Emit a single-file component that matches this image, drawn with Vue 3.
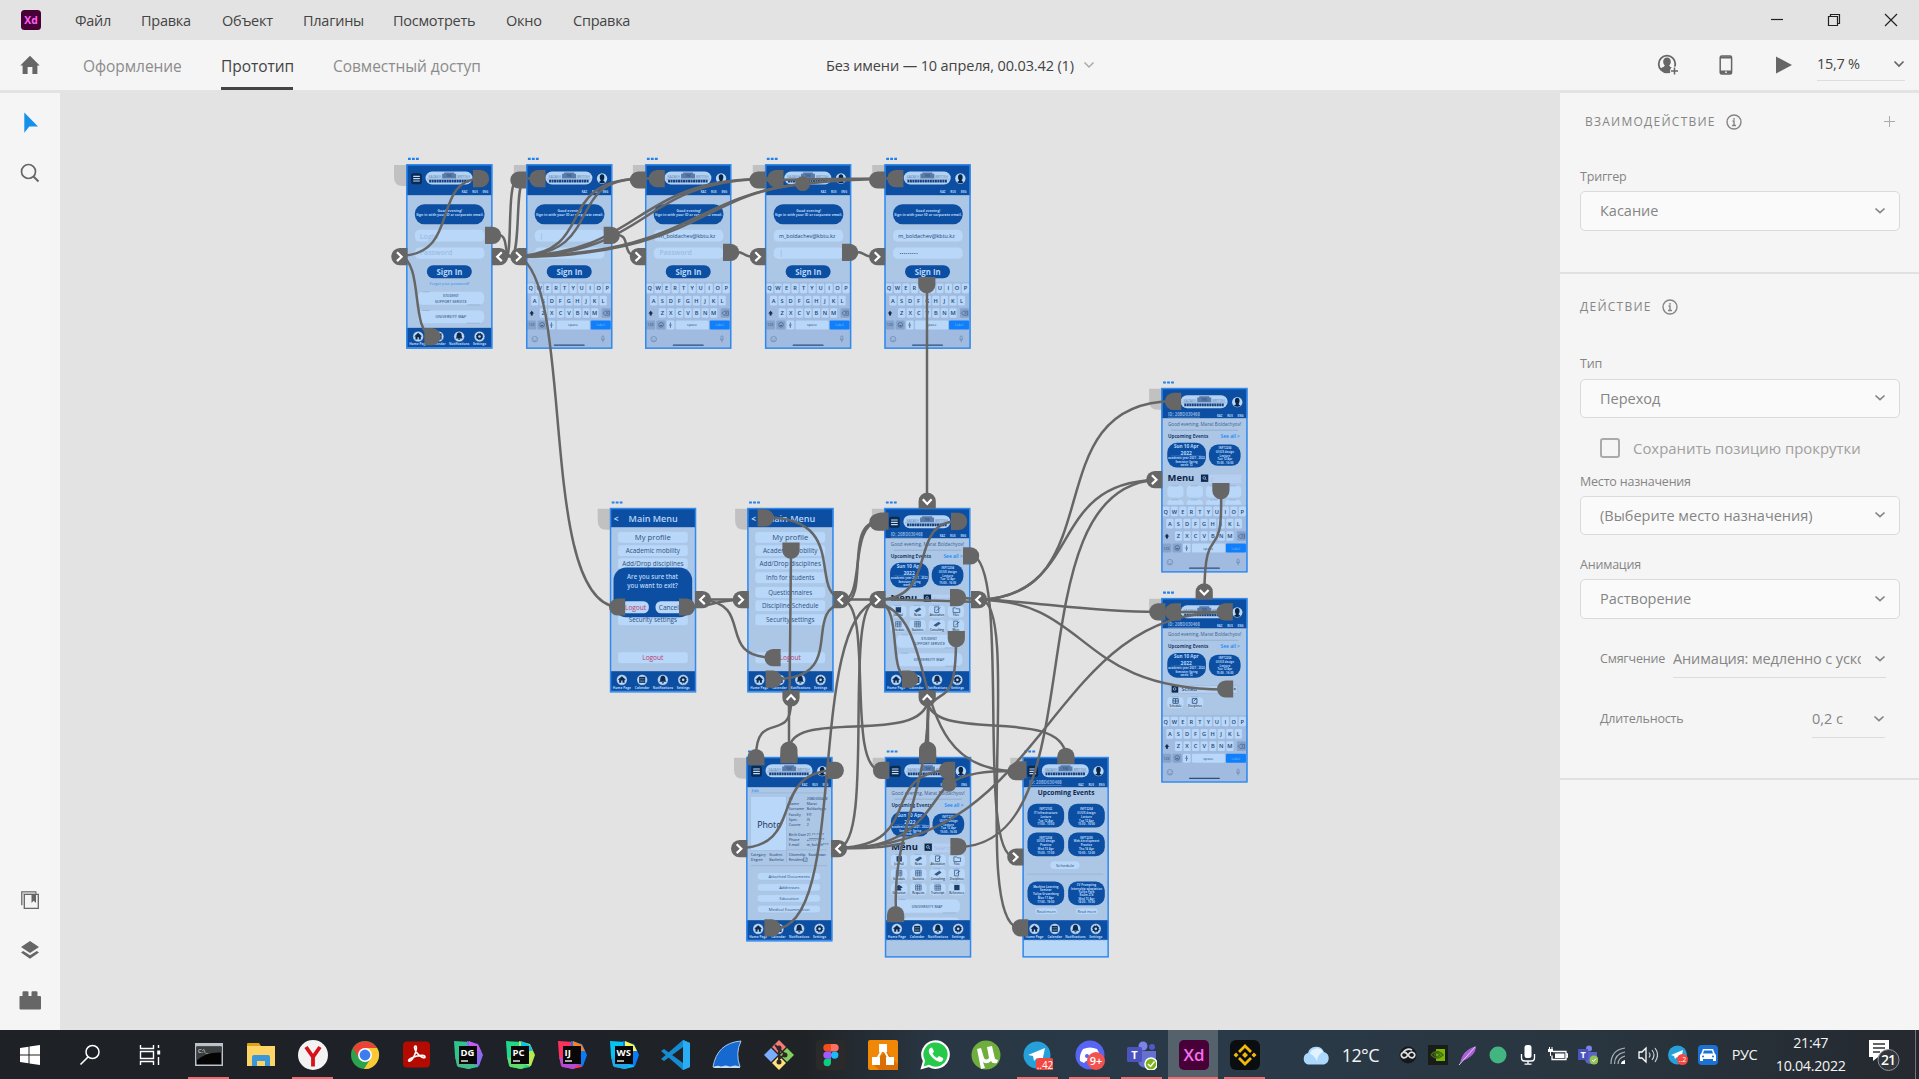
<script setup>
const menus = [
  ['Файл', 66], ['Правка', 81], ['Объект', 81], ['Плагины', 90], ['Посмотреть', 113], ['Окно', 67], ['Справка', 70],
]

/* Artboards: position of the top-left corner, kind of screen and height in board units (3 units = 1px) */
const boards = [
  { x: 406.5, y: 164.5, kind: 'login' },
  { x: 526.4, y: 164.5, kind: 'login', kb: true, one: '|', two: '' },
  { x: 645.4, y: 164.5, kind: 'login', kb: true, one: 'm_boldachev@kbtu.kz', two: 'Password' },
  { x: 765.3, y: 164.5, kind: 'login', kb: true, one: 'm_boldachev@kbtu.kz', two: '|' },
  { x: 884.7, y: 164.5, kind: 'login', kb: true, one: 'm_boldachev@kbtu.kz', two: '•••••••••' },
  { x: 610.2, y: 508.2, kind: 'menu', dialog: true },
  { x: 747.6, y: 508.2, kind: 'menu' },
  { x: 884.4, y: 508.2, kind: 'home', rows: 2 },
  { x: 746.5, y: 757.2, kind: 'profile' },
  { x: 885.2, y: 757.2, kind: 'home', rows: 3, tall: true },
  { x: 1022.8, y: 757.2, kind: 'events', tall: true },
  { x: 1161.6, y: 388.2, kind: 'home', kb: true, rows: 0 },
  { x: 1161.6, y: 598.3, kind: 'home', kb: true, rows: 0, search: true },
]
const height = (b) => (b.tall ? 598 : 550)

const keys = [
  ...'QWERTYUIOP'.split('').map((c, i) => ({ c, x: 2 + i * 25.5, y: 5 })),
  ...'ASDFGHJKL'.split('').map((c, i) => ({ c, x: 14 + i * 25.7, y: 42 })),
  ...'ZXCVBNM'.split('').map((c, i) => ({ c, x: 40 + i * 25.7, y: 79 })),
]
const menuItems = [
  ['My profile', 88, 108], ['Academic mobility', 128, 163], ['Add/Drop disciplines', 167, 184],
  ['Info for students', 209, 145], ['Questionnaires', 253, 132], ['Discipline Schedule', 293, 170], ['Security settings', 335, 145],
]
/* The dialog covers the rows in the middle of the list */
const visibleItems = (b) => menuItems.filter((m) => !b.dialog || m[1] < 200 || m[1] > 300)
const tiles = ['Journal', 'News', 'Attestation', 'Files', 'Schedule', 'Statistics', 'Consulting', 'Disciplines', 'Education', 'Requests', 'Transcript', 'References']
const tileX = [17, 75, 133, 190]
const profile = [
  ['ID', '20BD030468', 127], ['Name', 'Marat', 143], ['Surname', 'Boldachyov', 158], ['Faculty', 'FIT', 176], ['Spec.', 'IS', 191],
  ['Course', '2', 206], ['Birth Date', '21.**.****', 236], ['Phone', '+7777****', 251], ['E-mail', 'm_bolach***', 266],
]
const docs = [['Attached Documents', 346, 124], ['Addresses', 379, 60], ['Education', 412, 58], ['Medical Examination', 444, 122]]
const events = [
  [14, 140, ['INFT2102', 'IT Infrastructure', 'Lecture', 'Tue 12 Apr', '11:00 - 13:00']],
  [136, 140, ['INFT2204', 'UI/UX design', 'Lecture', 'Tue 12 Apr', '15:00 - 16:00']],
  [14, 226, ['INFT2204', 'UI/UX design', 'Practice', 'Wed 13 Apr', '15:00 - 17:00']],
  [136, 226, ['INFT2205', 'Web development', 'Practice', 'Thu 14 Apr', '10:00 - 12:00']],
  [14, 373, ['Machine Learning', 'Seminar', 'Yuliya Grosenberg', 'Mon 11 Apr', '17:00 - 19:00']],
  [136, 373, ['CV Prompting', 'Internship adaptation', 'Yuliya Park', 'Room 274', 'Wed 13 Apr', '14:00 - 15:00']],
]

const links = [
  'M400 256C462 254 430 180 481 178.5', 'M400 256C424 262 410 332 432 336', 'M498 235C510 235 502 256 512 256.5', 'M503 256.5H522',
  'M506 257C513 256 506 180 518 178', 'M512 257C520 250 516 190 522 184', 'M518 178.5H538', 'M638 178.5H656', 'M757 178.5H775', 'M877 178.5H895',
  'M522 256C596 250 555 181 638 179', 'M522 256C604 252 565 180 638 179', 'M522 256C640 252 635 182 757 179', 'M522 257C650 252 640 184 757 179',
  'M522 256C690 254 690 196 803 184', 'M522 257C700 254 700 193 803 184', 'M795 185C830 180 850 180 877 179', 'M750 181C830 178 850 179 877 178.5',
  'M520 257C575 290 538 600 617 607', 'M617 235C632 235 620 256 638 256', 'M735 252C748 252 740 257 757 257', 'M855 252C868 252 860 257 877 257',
  'M927 288V500', 'M689 607C715 607 712 600 740 600', 'M703 599.5H740', 'M703 600C755 604 715 657 772 657.5', 'M765 517.5C850 517 808 592 842 599',
  'M775 679C848 679 802 612 842 603', 'M791 552L789.5 700', 'M842 599.5H878', 'M842 600.5C866 600 848 523 879 522', 'M845 603C868 598 846 527 875 522',
  'M878 600C942 598 905 521 959 521', 'M878 599L980 602', 'M878 600C905 609 885 679 911 679.5', 'M878 603C945 620 900 770 1015 771',
  'M842 600C874 602 846 768 880 770', 'M876 601C842 602 876 846 838 848', 'M876 601C805 625 850 932 773 929',
  'M971 555C1012 560 975 855 1014 857', 'M981 600C1022 602 970 928 1020 928', 'M955 597.5C975 598 978 600 983 600',
  'M979 600C1085 595 1045 483 1155 480', 'M979 600C1115 595 1032 403 1173 401', 'M958 847C1100 845 1010 490 1155 480',
  'M979 599C1040 602 1090 612 1157 612', 'M979 600C1090 600 1075 689 1225 689.5', 'M839 848C1050 848 1045 612 1225 612', 'M839 848C870 849 885 847 905 843',
  'M1221 492C1223 570 1205 515 1204.4 592', 'M791 700C792 745 756 708 756 757', 'M789 700V750', 'M928 700C922 745 800 710 790 745',
  'M927 700C932 745 1060 705 1066 755', 'M928 700V750', 'M929 700L926 750', 'M956 640C956 700 944 690 933 702',
  'M738 848C808 848 765 772 836 770', 'M839 848C925 845 878 775 947 770', 'M839 848C920 850 930 800 949 784C965 773 985 771 1015 771',
  'M896 912C892 830 930 790 928 700', 'M1173 612C1190 612 1200 612 1225 612',
]

/* Handles: left, top, rounded side, chevron direction */
const handles = [
  [473, 170, 'r'], [485, 226.7, 'r'], [391.3, 248, 'l', 'r'], [492, 248, 'r', 'l'], [510.3, 248, 'l', 'r'], [510.3, 171.4, 'l'],
  [529.3, 170, 'l'], [603.7, 226.7, 'r'], [629.8, 248, 'l', 'r'], [629.8, 171.4, 'l'], [648.6, 170, 'l'], [424.4, 328, 'r'],
  [749.4, 171.4, 'l'], [767.3, 170, 'l'], [869, 171.4, 'l'], [887.2, 170, 'l'], [723, 243.8, 'r'], [749.6, 248, 'l', 'r'],
  [842, 243.8, 'r'], [869, 248, 'l', 'r'], [918.2, 277, 'd'],
  [609, 598.4, 'l'], [679, 598.4, 'r'], [695, 591, 'r', 'l'], [732.6, 591, 'l', 'r'], [757.6, 509.2, 'r'], [782.4, 542.6, 'd'],
  [764.4, 649, 'l'], [765.6, 670.6, 'r'], [833.2, 591, 'r', 'l'], [869.3, 591, 'l', 'r'], [869.3, 513.6, 'l'], [872.3, 512.6, 'l'],
  [951, 512.8, 'r'], [963, 547.3, 'r'], [950, 589, 'r'], [971, 591, 'r', 'l'], [947.7, 631, 'd'], [902, 670.6, 'r'],
  [918.6, 492.6, 'u', 'd'], [782.4, 690.4, 'd', 'u'], [918.6, 690.4, 'd', 'u'],
  [747.3, 749, 'u'], [780.3, 741.6, 'u'], [780.3, 747, 'u'], [919, 741.6, 'u'], [919, 747, 'u'], [1057.3, 747.7, 'u'],
  [827.7, 761.7, 'r'], [873, 761.7, 'l'], [939, 761.7, 'l'], [1007.3, 763, 'l'], [1010.3, 761.3, 'l'],
  [731, 840, 'l', 'r'], [831, 840, 'r', 'l'], [950.4, 838, 'r'], [1007.2, 848.4, 'l', 'r'], [887, 906, 'u'], [1012, 919.3, 'l'], [764.4, 919.3, 'r'],
  [1165, 392.7, 'l'], [1146.2, 471, 'l', 'r'], [1212.3, 483, 'd'], [1195.6, 583.2, 'u', 'd'], [1149.3, 603.3, 'l'], [1164.8, 603.3, 'l'],
  [1216.6, 603.3, 'l'], [1217, 680.4, 'l'],
]
function shape([x, y, side]) {
  const a = 16.2, b = 17.2, r = 8.6
  if (side === 'r') return `M${x} ${y}h${a - r}a${r} ${r} 0 0 1 0 ${b}h${r - a}z`
  if (side === 'l') return `M${x + a} ${y}h${r - a}a${r} ${r} 0 0 0 0 ${b}h${a - r}z`
  if (side === 'd') return `M${x} ${y}v${a - r}a${r} ${r} 0 0 0 ${b} 0v${r - a}z`
  return `M${x} ${y + a}v${r - a}a${r} ${r} 0 0 1 ${b} 0v${a - r}z`
}
function chevron([x, y, side, dir]) {
  const cx = x + (side === 'u' || side === 'd' ? 8.6 : side === 'l' ? 8 : 7.5)
  const cy = y + (side === 'd' ? 7.2 : side === 'u' ? 9 : 8.7)
  const s = 2.3, l = 4.4
  if (dir === 'r') return `M${cx - s} ${cy - l}L${cx + s} ${cy}L${cx - s} ${cy + l}`
  if (dir === 'l') return `M${cx + s} ${cy - l}L${cx - s} ${cy}L${cx + s} ${cy + l}`
  if (dir === 'd') return `M${cx - l} ${cy - s}L${cx} ${cy + s}L${cx + l} ${cy - s}`
  return `M${cx - l} ${cy + s}L${cx} ${cy - s}L${cx + l} ${cy + s}`
}
const arrows = handles.filter((h) => h[3])

const jet = {
  dg: ['DG', '#2fc48b', '#8a6bf0', '#c45cf0', '#45b98c'],
  pc: ['PC', '#21d789', '#b8ea4e', '#07c3f2', '#5fdc6a'],
  ij: ['IJ', '#fe315d', '#087cfa', '#fc801d', '#b24bd8'],
  ws: ['WS', '#07c3f2', '#087cfa', '#fcf84a', '#20a9e8'],
}
const apps = ['cmd', 'folder', 'yandex', 'chrome', 'acrobat', 'dg', 'pc', 'ij', 'ws', 'code', 'shark', 'git', 'figma', 'drawio', 'whatsapp', 'utorrent', 'telegram', 'discord', 'teams', 'xd', 'binance']
const running = ['cmd', 'yandex', 'telegram', 'discord', 'teams', 'xd', 'binance']
</script>

<template>
  <div class="app">
    <header class="titlebar">
      <svg class="logo" width="22" height="22" viewBox="0 0 22 22"><rect x="1" y="1" width="20" height="20" rx="3.5" fill="#470137" /><text x="11" y="14.6" text-anchor="middle" font-size="11" font-weight="700" fill="#ff61f6" textLength="13.5" lengthAdjust="spacingAndGlyphs">Xd</text></svg>
      <nav class="menus"><span v-for="m in menus" :key="m[0]" :style="{ width: m[1] + 'px' }">{{ m[0] }}</span></nav>
      <div class="winbtns">
        <svg width="14" height="14" viewBox="0 0 14 14"><path d="M1 6.5h12" /></svg>
        <svg width="14" height="14" viewBox="0 0 14 14"><path d="M1.500 3.500h9v9h-9zM3.500 3.500v-2h9v9h-2" /></svg>
        <svg width="14" height="14" viewBox="0 0 14 14"><path d="M1 1l12 12M13 1L1 13" /></svg>
      </div>
    </header>

    <div class="toolbar">
      <svg class="home" width="20" height="20" viewBox="0 0 20 20"><path d="M10 .8L.3 10.500h2.300V19h5v-7h4.800v7h5v-8.500h2.300z" fill="#666" /></svg>
      <div class="tabs"><span>Оформление</span><span class="on">Прототип</span><span>Совместный доступ</span></div>
      <div class="doc"><span>Без имени — 10 апреля, 00.03.42 (1)</span><svg width="12" height="8" viewBox="0 0 12 8"><path d="M1.500 1.500L6 6l4.500-4.500" /></svg></div>
      <div class="tools">
        <svg width="22" height="22" viewBox="0 0 22 22"><circle cx="10" cy="10" r="8.300" fill="none" stroke="#666" stroke-width="1.800" /><path d="M10 3.500c-2.500 0-3.800 1.800-3.800 4.200 0 2 .9 3 1.500 3.700.2 1-.2 1.400-3.700 2.700l-1 .5C5 16 7 12.500 10 12.500s5 3.500 7 2.100l-1-.5c-3.500-1.300-3.900-1.700-3.700-2.700.6-.7 1.500-1.700 1.500-3.700 0-2.400-1.300-4.200-3.800-4.200z" fill="#666" /><path d="M3.500 14.500q3.500-1.300 4.200-2.500h4.600q.7 1.200 4.200 2.500-2.500 3.500-6.500 3.500t-6.500-3.500z" fill="#666" /><circle cx="17.500" cy="17" r="4.500" fill="#f5f5f5" /><path d="M17.500 13.500v7M14 17h7" stroke="#666" stroke-width="1.500" /></svg>
        <svg width="14" height="20" viewBox="0 0 14 20"><rect x="1.200" y="1" width="11.400" height="18" rx="1.500" fill="none" stroke="#666" stroke-width="1.500" /><path d="M1 1.500h12v2H1zM1 15.500h12v3.300H1z" fill="#666" /><circle cx="7" cy="17.200" r=".9" fill="#f5f5f5" /></svg>
        <svg width="18" height="18" viewBox="0 0 18 18"><path d="M1 .5L17 9 1 17.500z" fill="#666" /></svg>
      </div>
      <div class="zoom"><span>15,7 %</span><svg width="12" height="8" viewBox="0 0 12 8"><path d="M1.500 1.500L6 6l4.500-4.500" /></svg></div>
    </div>

    <main class="work">
      <aside class="rail">
        <svg class="pointer" width="20" height="22" viewBox="0 0 20 22"><path d="M3.300.5v20.300l5-6.300H17z" fill="#1491ea" /></svg>
        <svg class="mag" width="20" height="20" viewBox="0 0 20 20"><circle cx="8.500" cy="8.500" r="7" fill="none" stroke="#666" stroke-width="1.700" /><path d="M13.500 13.500l5 5" stroke="#666" stroke-width="2" /></svg>
        <div class="spring"></div>
        <svg width="18" height="18" viewBox="0 0 18 18"><path d="M.8 14.300V.8h14v2M3.300 3.300h14v14h-14z" fill="none" stroke="#666" stroke-width="1.300" /><path d="M1.500 1.500h13v1.300H2.800V14H1.500z" fill="#bbb" /><path d="M10.500 3.500h4.500V12l-2.300-2.200L10.500 12z" fill="#666" /></svg>
        <svg width="20" height="20" viewBox="0 0 20 20"><path d="M10 1l9 6-9 6-9-6zM1 12.500l2.200-1.600L10 15.300l6.800-4.400L19 12.500 10 18.700z" fill="#666" /></svg>
        <svg width="22" height="20" viewBox="0 0 22 20"><path d="M1 6h2.500V2.500q0-1.200 1.200-1.200h3.600q1.200 0 1.200 1.200V6h3V2.500q0-1.200 1.200-1.200h3.600q1.200 0 1.200 1.200V6H21q1 0 1 1v11.500q0 1-1 1H1.500q-1 0-1-1V7q0-1 .5-1z" fill="#666" /></svg>
      </aside>

      <svg class="canvas" width="1500" height="937" viewBox="60 93 1500 937">
        <defs>
          <g id="crest">
            <rect x="57" y="21" width="141" height="39" rx="19.500" fill="#b4d2f4" />
            <text x="66" y="40" class="tiny dim" textLength="38" lengthAdjust="spacingAndGlyphs">KAZAKH</text>
            <text x="152" y="40" class="tiny dim" textLength="38" lengthAdjust="spacingAndGlyphs">BRITISH</text>
            <path d="M107 42V28h6v-4h30v4h6v14z" fill="#5a7ba8" /><text x="128" y="38" class="tiny" fill="#1d4274" text-anchor="middle">THE</text>
            <path d="M62 44h132" stroke="#8fb0d8" stroke-width="3" /><path d="M68 50h120" stroke="#16407c" stroke-width="8" stroke-dasharray="6 1.500" />
          </g>
          <g id="burger"><rect x="14" y="26" width="32" height="33" rx="6" fill="#0b2a4e" /><path d="M20 35.500h20M20 42.500h20M20 49.500h20" stroke="#bcd9fb" stroke-width="3.500" /></g>
          <g id="avatar"><circle cx="227" cy="42" r="15.500" fill="#b8d7f9" /><path d="M227 29c-9 0-8 14-4 18 0 4-4 3-6 6q10 6 20 0c-2-3-6-2-6-6 4-4 5-18-4-18z" fill="#082545" /></g>
          <g id="langs" class="tiny bold" fill="#b8d7f9"><text x="166" y="85">KAZ</text><text x="197" y="85">RUS</text><text x="228" y="85">ENG</text></g>
          <g id="tabbar">
            <rect y="489" width="257" height="59" fill="#0c4ea2" />
            <circle v-for="x in [35, 96, 158, 219]" :key="x" :cx="x" cy="515" r="16" fill="#b8d7f9" stroke="#082f66" />
            <g fill="#0b2a4e"><path d="M35 504l-12 11h4v9h6v-7h4v7h6v-9h4z" /><path d="M87 506h18v18H87z" /><path d="M89 511h14M89 516h14M89 520h14" stroke="#87a9d4" stroke-width="1.500" /><path d="M158 503c-7 0-8 7-8 14l-3 4h22l-3-4c0-7-1-14-8-14zm-3 19h6v3h-6z" /><circle cx="219" cy="515" r="6.500" fill="none" stroke="#0b2a4e" stroke-width="5" /><circle cx="219" cy="515" r="9.500" fill="none" stroke="#0b2a4e" stroke-width="3" stroke-dasharray="4 3.400" /></g>
            <g class="small bold" fill="#b8d7f9" text-anchor="middle"><text x="35" y="541" textLength="54" lengthAdjust="spacingAndGlyphs">Home Page</text><text x="96" y="541" textLength="44" lengthAdjust="spacingAndGlyphs">Calendar</text><text x="158" y="541" textLength="61" lengthAdjust="spacingAndGlyphs">Notifications</text><text x="219" y="541" textLength="39" lengthAdjust="spacingAndGlyphs">Settings</text></g>
          </g>
          <g id="keyboard">
            <rect width="257" height="198" fill="#a0bbdf" />
            <g v-for="k in keys" :key="k.c"><rect :x="k.x" :y="k.y" width="21.500" height="29" rx="4" fill="#b8d7f9" /><text :x="k.x + 10.700" :y="k.y + 21" class="key" text-anchor="middle">{{ k.c }}</text></g>
            <path d="M16 87l7 8h-4v6h-6v-6H9z" fill="#122c4d" />
            <rect x="226" y="79" width="27" height="29" rx="4" fill="#86a3cb" /><path d="M230 94l6-6h13v12h-13zM240 91l5 5M245 91l-5 5" fill="none" stroke="#27466f" stroke-width="1.500" />
            <rect x="2" y="116" width="27" height="27" rx="4" fill="#86a3cb" /><text x="15" y="134" class="small" text-anchor="middle" fill="#27466f">123</text>
            <rect x="33" y="116" width="27" height="27" rx="4" fill="#86a3cb" /><circle cx="47" cy="129" r="7" fill="none" stroke="#27466f" stroke-width="1.500" /><path d="M43 130q4 6 8 0z" fill="#27466f" />
            <rect x="64" y="116" width="23" height="27" rx="4" fill="#b8d7f9" /><path d="M75 122v9M71 129q4 7 8 0M75 133v5" stroke="#27466f" stroke-width="2" fill="none" />
            <rect x="91" y="116" width="99" height="27" rx="4" fill="#b8d7f9" /><text x="140" y="134" class="small" text-anchor="middle" fill="#27466f" textLength="30">space</text>
            <rect x="193" y="116" width="60" height="27" rx="3" fill="#0f7ffb" /><text x="223" y="134" class="small" text-anchor="middle" fill="#79bbff" textLength="26">Label</text>
            <circle cx="25" cy="172" r="8.500" fill="none" stroke="#5575a3" stroke-width="1.500" /><path d="M21 169v2M29 169v2M20 175q5 4 10 0" stroke="#5575a3" stroke-width="1.500" fill="none" />
            <rect x="226.500" y="162" width="6" height="12" rx="3" fill="none" stroke="#5575a3" stroke-width="1.500" /><path d="M224 172q5.500 8 11 0M229.500 176v5" stroke="#5575a3" stroke-width="1.500" fill="none" />
            <path d="M84 190h89" stroke="#2b517f" stroke-width="4" stroke-linecap="round" />
          </g>
        </defs>

        <g v-for="(b, i) in boards" :key="i">
          <path :d="`M${b.x} ${b.y + .5}h-12.500v12q0 9 9 9h3.500z`" fill="#c1c1c1" />
          <path :d="`M${b.x + 1.500} ${b.y - 5.700}h11`" stroke="#1f80ee" stroke-width="2.200" stroke-dasharray="2.800 1.200" />
          <g :transform="`translate(${b.x} ${b.y}) scale(.33333)`">
            <rect width="257" :height="height(b)" :fill="b.kind === 'events' ? '#b9d8f8' : '#acc6e6'" />
            <rect width="257" height="549" fill="#acc6e6" />
            <rect width="257" :height="b.kind === 'menu' ? 57 : b.kind === 'login' ? 92 : 90" fill="#0c4ea2" />
            <template v-if="b.kind !== 'menu'"><use href="#crest" /><use v-if="!b.kb" href="#burger" /><use href="#avatar" /><use href="#langs" /></template>

            <template v-if="b.kind === 'login'">
              <rect x="25" y="119" width="209" height="60" rx="28" fill="#0c4ea2" />
              <g class="small bold" fill="#b8d7f9" text-anchor="middle"><text x="130" y="143" textLength="74" lengthAdjust="spacingAndGlyphs">Good evening!</text><text x="130" y="155" textLength="202" lengthAdjust="spacingAndGlyphs">Sign in with your ID or corporate email.</text></g>
              <rect x="25" y="196" width="209" height="35" rx="14" fill="#b8d7f9" /><rect x="25" y="249" width="209" height="34" rx="14" fill="#b8d7f9" />
              <text v-if="!b.kb" x="40" y="223" class="ph">Login</text><text v-if="!b.kb" x="40" y="272" class="ph">Password</text>
              <text v-if="b.one === '|'" x="39" y="221" class="ph">|</text><text v-else-if="b.one" x="41" y="220" class="mail" textLength="169" lengthAdjust="spacingAndGlyphs">{{ b.one }}</text>
              <text v-if="b.two" :x="b.two[0] === '•' ? 45 : 42" y="272" :class="b.two[0] === '•' ? 'dots' : 'ph'" :textLength="b.two[0] === '•' ? 54 : undefined">{{ b.two }}</text>
              <rect x="61" y="302" width="135" height="39" rx="19.500" fill="#0c4ea2" /><text x="129" y="332" class="bold" font-size="24" fill="#b8d7f9" text-anchor="middle" textLength="78" lengthAdjust="spacingAndGlyphs">Sign In</text>
              <template v-if="!b.kb">
                <text x="129" y="362" class="mid" fill="#258ff3" text-anchor="middle" textLength="120" lengthAdjust="spacingAndGlyphs">Forgot your password?</text>
                <g class="card"><rect x="34" y="382" width="199" height="39" rx="14" /><rect x="34" y="438" width="199" height="38" rx="14" /></g>
                <g class="small semi" text-anchor="middle" fill="#405a7e"><text x="133" y="398">STUDENT</text><text x="133" y="416" textLength="95">SUPPORT SERVICE</text><text x="133" y="461" textLength="92">UNIVERSITY MAP</text></g>
              </template>
            </template>

            <template v-if="b.kind === 'menu'">
              <text x="11" y="42" font-size="25" class="bold" fill="#b8d7f9">&lt;</text><text x="129" y="41" font-size="27" class="semi" fill="#b8d7f9" text-anchor="middle" textLength="148" lengthAdjust="spacingAndGlyphs">Main Menu</text>
              <g v-for="m in visibleItems(b)" :key="m[0]"><rect x="22" :y="m[1] - 18" width="212" height="35" rx="10" fill="#b8d7f9" stroke="#9fbbe0" /><text x="128" :y="m[1] + 7" :font-size="m[1] === 88 ? 22 : 20" fill="#31527c" text-anchor="middle" :textLength="m[2]" lengthAdjust="spacingAndGlyphs">{{ m[0] }}</text></g>
              <rect x="22" y="431" width="212" height="35" rx="10" fill="#b8d7f9" stroke="#9fbbe0" /><text x="128" y="456" font-size="20" fill="#bd3a6c" text-anchor="middle" textLength="63">Logout</text>
              <template v-if="b.dialog">
                <rect x="10" y="178" width="236" height="149" rx="38" fill="#0c4ea2" />
                <g font-size="20" text-anchor="middle" fill="#b8d7f9" class="semi"><text x="127" y="213" textLength="153" lengthAdjust="spacingAndGlyphs">Are you sure that</text><text x="127" y="239" textLength="151" lengthAdjust="spacingAndGlyphs">you want to exit?</text></g>
                <rect x="32" y="279" width="84" height="36" rx="16" fill="#b8d7f9" /><rect x="136" y="279" width="98" height="36" rx="16" fill="#b8d7f9" />
                <text x="76" y="305" font-size="20" fill="#bd3a6c" text-anchor="middle" textLength="63">Logout</text><text x="176" y="305" font-size="20" fill="#31527c" text-anchor="middle" textLength="60">Cancel</text>
              </template>
            </template>

            <template v-if="b.kind === 'home'">
              <text v-if="!b.tall" x="19" y="83" class="mid bold" fill="#86afe0" text-decoration="underline" textLength="96" lengthAdjust="spacingAndGlyphs">ID: 20BD030468</text>
              <text x="19" y="114" font-size="16" fill="#42618c" textLength="220" lengthAdjust="spacingAndGlyphs">Good evening, Marat Boldachyov!</text>
              <path d="M28 126h202" stroke="#7c98be" stroke-width="1.500" />
              <text x="19" y="149" class="bold" font-size="15" fill="#1d3e6a" textLength="121" lengthAdjust="spacingAndGlyphs">Upcoming Events</text><text x="177" y="149" class="semi" font-size="15" fill="#1388fa" textLength="58" lengthAdjust="spacingAndGlyphs">See all &gt;</text>
              <rect x="17" y="164" width="116" height="74" rx="29" fill="#0c4ea2" /><rect x="142" y="169" width="95" height="64" rx="27" fill="#0c4ea2" />
              <g fill="#b8d7f9" text-anchor="middle" class="bold"><text x="74" y="180" font-size="16" textLength="74" lengthAdjust="spacingAndGlyphs">Sun 10 Apr</text><text x="74" y="199" font-size="16" textLength="34" lengthAdjust="spacingAndGlyphs">2022</text><text x="75" y="213" class="tiny" textLength="110" lengthAdjust="spacingAndGlyphs">academic year 2021 - 2022</text><text x="75" y="223" class="tiny" textLength="66" lengthAdjust="spacingAndGlyphs">Semester: Spring</text><text x="75" y="234" class="tiny">week: 12</text>
                <text v-for="(t, n) in events[1][2]" :key="n" x="190" :y="182 + n * 11.500" class="tiny">{{ t }}</text></g>
              <path d="M28 203h94" stroke="#7fa9dc" />
              <template v-if="!b.search">
                <text x="18" y="278" class="bold" font-size="27" fill="#0b2547" textLength="80" lengthAdjust="spacingAndGlyphs">Menu</text>
                <rect x="118" y="259" width="22" height="22" fill="#0b2a4e" /><circle cx="128" cy="269" r="4" fill="none" stroke="#b8d7f9" stroke-width="2" /><path d="M131 272l4 4" stroke="#b8d7f9" stroke-width="2" />
                <rect x="142" y="259" width="97" height="26" fill="#b6cff0" /><text x="147" y="277" font-size="17" fill="#9cb9df">{{ b.kb ? '|' : 'Search' }}</text>
              </template>
              <template v-else>
                <rect x="26" y="262" width="202" height="23" fill="#b6cff0" stroke="#8dabd0" /><rect x="30" y="263" width="20" height="20" fill="#0b2a4e" /><circle cx="39" cy="272" r="4" fill="none" stroke="#b8d7f9" stroke-width="2" /><text x="60" y="279" font-size="16" class="semi" fill="#2f4c74">Sched</text><text x="215" y="279" font-size="15">×</text>
                <g class="card"><rect x="17" y="296" width="49" height="34" rx="12" /><rect x="76" y="296" width="49" height="34" rx="12" /></g><path d="M34 301h16v14H34zM34 308h16M42 301v14M92 301h14v14H92zM96 309l10-10" fill="none" stroke="#294a75" stroke-width="2.500" /><text x="42" y="327" class="tiny" text-anchor="middle">Schedule</text><text x="100" y="327" class="tiny" text-anchor="middle">Disciplines</text>
              </template>
              <template v-if="b.kb && !b.search"><g class="card"><template v-for="x in tileX" :key="x"><rect :x="x" y="293" width="49" height="35" rx="12" /><rect :x="x" y="335" width="49" height="35" rx="12" /></template></g></template>
              <g v-for="(t, n) in tiles.slice(0, b.rows * 4)" :key="t" :transform="`translate(${tileX[n % 4]} ${292 + Math.floor(n / 4) * 43})`">
                <rect width="49" height="36" rx="12" class="tile" />
                <path v-if="n === 0 || n === 11" d="M17 5h16v16H17z" fill="#1d3d68" /><path v-else-if="n === 8" d="M12 12l12-7 12 7-12 6zM18 17h13v5H18z" fill="#1d3d68" /><path v-else-if="n % 5 === 1" d="M14 16l16-10 6 5-14 10z" fill="#36577f" /><path v-else-if="n % 5 === 2" d="M18 4h12v17H18zM23 15l12-9" fill="none" stroke="#27476f" stroke-width="2" /><path v-else-if="n % 5 === 3" d="M16 7h8l3 3h9v11H16z" fill="none" stroke="#27476f" stroke-width="2" /><path v-else d="M16 5h17v16H16zM16 10h17M16 15h17M22 5v16M28 5v16" fill="none" stroke="#36577f" stroke-width="1.800" />
                <text x="24.500" y="32" class="tiny" text-anchor="middle">{{ b.rows === 2 && n === 7 ? 'More' : t }}</text>
              </g>
              <template v-if="b.rows === 2"><g class="card"><rect x="36" y="380" width="198" height="39" rx="14" /><rect x="36" y="435" width="198" height="39" rx="14" /></g><g class="small semi" fill="#405a7e" text-anchor="middle"><text x="134" y="396">STUDENT</text><text x="134" y="411" textLength="95">SUPPORT SERVICE</text><text x="134" y="458" textLength="92">UNIVERSITY MAP</text></g></template>
              <template v-if="b.rows === 3"><g class="card"><rect x="26" y="427" width="198" height="40" rx="14" /><rect x="26" y="481" width="198" height="39" rx="14" /></g><text x="126" y="452" class="small semi" fill="#405a7e" text-anchor="middle" textLength="92">UNIVERSITY MAP</text></template>
            </template>

            <template v-if="b.kind === 'profile'">
              <text x="15" y="103" class="mid" fill="#1388fa" textLength="22">Edit</text><path d="M13 107h228M13 278h228M13 325h228M120 118v199" stroke="#8aa8d0" stroke-width="1.500" />
              <rect x="13" y="118" width="106" height="161" fill="#b8d7f9" stroke="#9dbbe0" /><text x="32" y="212" font-size="28" fill="#132c4e" textLength="73" lengthAdjust="spacingAndGlyphs">Photo</text>
              <g v-for="p in profile" :key="p[0]" class="small semi" fill="#405f8a"><text x="127" :y="p[2]">{{ p[0] }}</text><text x="181" :y="p[2]">{{ p[1] }}</text></g>
              <g class="small semi" fill="#405f8a"><text x="13" y="296">Category</text><text x="68" y="296">Student</text><text x="127" y="296" textLength="50">Citizenship</text><text x="186" y="296" textLength="52">Kazakhstan</text><text x="13" y="311">Degree</text><text x="68" y="311">Bachelor</text><text x="127" y="311">Resident</text></g><path d="M171 302h11v11h-11zM173 307l3 3 5-7" fill="none" stroke="#405f8a" stroke-width="1.500" />
              <g v-for="d in docs" :key="d[0]"><rect x="32" :y="d[1]" width="190" height="23" rx="10" fill="#b8d7f9" stroke="#9bb8de" /><text x="128" :y="d[1] + 17" class="mid" fill="#31527c" text-anchor="middle" :textLength="d[2]" lengthAdjust="spacingAndGlyphs">{{ d[0] }}</text></g>
            </template>

            <template v-if="b.kind === 'events'">
              <text x="19" y="81" class="mid bold" fill="#86afe0" text-decoration="underline" textLength="98" lengthAdjust="spacingAndGlyphs">ID: 20BD030468</text>
              <text x="130" y="113" class="bold" font-size="20" fill="#0b2a52" text-anchor="middle" textLength="170" lengthAdjust="spacingAndGlyphs">Upcoming Events</text>
              <g v-for="(e, n) in events" :key="n" text-anchor="middle" class="tiny bold" fill="#b8d7f9"><rect :x="e[0]" :y="e[1]" width="110" height="71" rx="27" fill="#0c4ea2" /><text v-for="(t, k) in e[2]" :key="k" :x="e[0] + 55" :y="e[1] + (e[2].length > 5 ? 14 : 18) + k * (e[2].length > 5 ? 10 : 11.700)">{{ t }}</text></g>
              <g fill="#b8d7f9" stroke="#98b6dc"><rect x="81" y="311" width="91" height="26" rx="13" /><rect x="36" y="452" width="68" height="20" rx="10" /><rect x="158" y="452" width="68" height="20" rx="10" /></g>
              <g class="mid" fill="#31527c" text-anchor="middle"><text x="127" y="329">Schedule</text><text x="70" y="467" textLength="56" lengthAdjust="spacingAndGlyphs">Read more</text><text x="192" y="467" textLength="56" lengthAdjust="spacingAndGlyphs">Read more</text></g><path d="M13 351h228" stroke="#8aa8d0" stroke-width="1.500" />
            </template>

            <use v-if="b.kb" href="#keyboard" :y="b.kind === 'login' ? 352 : 350" /><use v-else href="#tabbar" :y="b.kind === 'login' ? 1 : 0" />
            <path v-if="b.tall" d="M0 548h257" stroke="#3d8be6" stroke-width="2" stroke-dasharray="9 6" />
            <rect x="1" y="1" width="255" :height="height(b)" fill="none" stroke="#2f89ef" stroke-width="4.500" />
          </g>
        </g>

        <g fill="none" stroke="#666" stroke-width="2.500"><path v-for="(l, i) in links" :key="i" :d="l" /></g>
        <g fill="#666"><path v-for="(h, i) in handles" :key="i" :d="shape(h)" /><circle cx="802.700" cy="183.700" r="7.400" /><circle cx="949" cy="784.300" r="7.400" /></g>
        <g fill="none" stroke="#fff" stroke-width="2.200"><path v-for="(h, i) in arrows" :key="i" :d="chevron(h)" /></g>
      </svg>

      <aside class="panel">
        <div class="head first"><span>ВЗАИМОДЕЙСТВИЕ</span><svg width="16" height="16" viewBox="0 0 16 16"><circle cx="8" cy="8" r="7" /><path d="M6.500 7H8v4.500M6 11.500h4M8 4v1.700" /></svg><i class="plus"></i></div>
        <label class="cap trig">Триггер</label>
        <div class="select">Касание<svg width="12" height="8" viewBox="0 0 12 8"><path d="M1.500 1.500L6 5.700l4.500-4.200" /></svg></div>
        <hr class="first-rule" />
        <div class="head"><span>ДЕЙСТВИЕ</span><svg width="16" height="16" viewBox="0 0 16 16"><circle cx="8" cy="8" r="7" /><path d="M6.500 7H8v4.500M6 11.500h4M8 4v1.700" /></svg></div>
        <label class="cap type">Тип</label>
        <div class="select">Переход<svg width="12" height="8" viewBox="0 0 12 8"><path d="M1.500 1.500L6 5.700l4.500-4.200" /></svg></div>
        <div class="check"><i></i><span>Сохранить позицию прокрутки</span></div>
        <label class="cap">Место назначения</label>
        <div class="select">(Выберите место назначения)<svg width="12" height="8" viewBox="0 0 12 8"><path d="M1.500 1.500L6 5.700l4.500-4.200" /></svg></div>
        <label class="cap anim">Анимация</label>
        <div class="select">Растворение<svg width="12" height="8" viewBox="0 0 12 8"><path d="M1.500 1.500L6 5.700l4.500-4.200" /></svg></div>
        <div class="line ease"><label>Смягчение</label><div class="field"><span>Анимация: медленно с ускорением</span><svg width="12" height="8" viewBox="0 0 12 8"><path d="M1.500 1.500L6 5.700l4.500-4.200" /></svg></div></div>
        <div class="line dur"><label>Длительность</label><div class="field short"><span>0,2 с</span><svg width="12" height="8" viewBox="0 0 12 8"><path d="M1.500 1.500L6 5.700l4.500-4.200" /></svg></div></div>
        <hr class="last-rule" />
      </aside>
    </main>

    <footer class="taskbar">
      <div class="sys"><svg width="22" height="22" viewBox="0 0 22 22"><path d="M1 4l8.500-1.200v7.700H1zM10.500 2.600L21 1v9.500H10.500zM1 11.500h8.500v7.700L1 18zM10.500 11.500H21V21l-10.500-1.600z" fill="#fff" /></svg></div>
      <div class="sys"><svg width="22" height="22" viewBox="0 0 22 22"><circle cx="13.500" cy="8" r="6.500" fill="none" stroke="#fff" stroke-width="1.500" /><path d="M9 13l-7.500 7.500" stroke="#fff" stroke-width="1.600" /></svg></div>
      <div class="sys view"><svg width="22" height="22" viewBox="0 0 22 22"><path d="M1.500 1v3.500h13V1M1.500 21v-3.500h13V21M1.500 7.500h13v7h-13zM19.500 1v3M19.500 13v8" fill="none" stroke="#fff" stroke-width="1.400" /><path d="M18.200 6.500h3v4h-3z" fill="#fff" /></svg></div>
      <div v-for="a in apps" :key="a" class="app-slot" :class="{ run: running.includes(a), active: a === 'xd' }">
        <svg width="30" height="30" viewBox="0 0 30 30">
          <template v-if="a === 'cmd'"><rect x="1" y="3" width="28" height="23" fill="#bcc3c8" /><rect x="2.500" y="6.500" width="25" height="18" fill="#050505" /><path d="M2.500 6.500h25v6q-15-1-25 8z" fill="#3b3e41" /><text x="4" y="13" font-size="6" fill="#eee">C:\_</text></template>
          <template v-else-if="a === 'folder'"><path d="M1 4q0-1 1-1h11l2 3H1z" fill="#e0a112" /><path d="M1 6h28v20H1z" fill="#fdd566" /><path d="M6 26V17q0-2 2-2h14q2 0 2 2v9h-5v-5h-8v5z" fill="#3b97d8" /></template>
          <template v-else-if="a === 'yandex'"><circle cx="15" cy="15" r="15" fill="#f3f3f3" /><path d="M8 7l7 10 7-10M15 16v10.500" fill="none" stroke="#d71218" stroke-width="3.800" /></template>
          <template v-else-if="a === 'chrome'"><circle cx="15" cy="15" r="14" fill="#2ba24c" /><path d="M15 8H27.100A14 14 0 0 1 14 29l7-11z" fill="#fcc934" /><path d="M2.900 8L9 18.500 15 8H27A14 14 0 0 0 2.900 8z" fill="#ea4335" /><circle cx="15" cy="15" r="7" fill="#fff" /><circle cx="15" cy="15" r="5.400" fill="#3c7df0" /></template>
          <template v-else-if="a === 'acrobat'"><rect x="1" y="1.500" width="27" height="26" rx="4" fill="#b30b00" /><path d="M7 21c-2-1 4-4 8-5s8-1 8 1-5 0-8-4-3-7-1.500-7 1 4-.5 8-4 8-6 7z" fill="none" stroke="#fff" stroke-width="1.600" /></template>
          <template v-else-if="jet[a]"><path d="M1 1l16 1 8 4 4 8-4 13-10 2L4 26 2 16z" :fill="jet[a][1]" /><path d="M14 1l11 3 5 11-4 11-12-3z" :fill="jet[a][2]" /><path d="M16 1l9 4 3 6-12 0z" :fill="jet[a][3]" /><path d="M2 17l3 10 12 2 5-6z" :fill="jet[a][4]" /><rect x="6" y="6" width="18" height="18" fill="#080808" /><text x="7.500" y="15.500" font-size="9.500" font-weight="700" fill="#fff">{{ jet[a][0] }}</text><path d="M8 21h7" stroke="#fff" stroke-width="1.300" /></template>
          <template v-else-if="a === 'code'"><path d="M22 0l7 3v24l-7 3L0 11l3-2 19 14V7L3 21l-3-2z" fill="#168bd0" /><path d="M22 0l7 3v24l-7 3z" fill="#29aef3" /></template>
          <template v-else-if="a === 'shark'"><path d="M1 27Q5 3 29 1q-6 12-1 26z" fill="#1769d2" stroke="#a8c9ed" /><path d="M1 28q4-4 8-1 5-3 9 0 5-3 10 0v1z" fill="#c7dced" /></template>
          <template v-else-if="a === 'git'"><path d="M15 0l7 7-7 7-7-7z" fill="#f57b75" /><path d="M7 8l7 7-7 7-7-7z" fill="#7cacfc" /><path d="M23 8l7 7-7 7-7-7z" fill="#85cf61" /><path d="M15 16l7 7-7 7-7-7z" fill="#ffe17d" /><path d="M11 5l4 4v13M15 9l7 6M15 19l5-4" stroke="#352a2a" stroke-width="2" fill="none" /><circle cx="15" cy="8" r="2.500" fill="#302828" /><circle cx="15" cy="22" r="2.500" fill="#302828" /><circle cx="21" cy="15" r="2.500" fill="#302828" /></template>
          <template v-else-if="a === 'figma'"><rect width="30" height="30" rx="4" fill="#2b2a2a" /><path d="M15 4h-4a3.700 3.700 0 0 0 0 7.400h4z" fill="#f24e1e" /><path d="M15 4h4a3.700 3.700 0 0 1 0 7.400h-4z" fill="#ff7262" /><path d="M15 11.400h-4a3.700 3.700 0 0 0 0 7.400h4z" fill="#a259ff" /><circle cx="18.700" cy="15.100" r="3.700" fill="#1abcfe" /><path d="M15 18.800h-4a3.700 3.700 0 1 0 4 3.700z" fill="#0acf83" /></template>
          <template v-else-if="a === 'drawio'"><rect width="30" height="30" rx="2" fill="#f08705" /><path d="M18 11l12 14v5H11l-6-6z" fill="#d96f05" /><path d="M14 10l-6 11M16 10l6 11" stroke="#fff" stroke-width="2" /><path d="M11 4h8v8h-8zM4 17h8v8H4zM18 17h8v8h-8z" fill="#fff" /></template>
          <template v-else-if="a === 'whatsapp'"><path d="M2 28l2-7a13.200 13.200 0 1 1 5 5z" fill="#27c94b" stroke="#fff" stroke-width="2.200" /><path d="M10 8q-3 3 1 8t9 6q4-1 3-4l-4-2-2 2q-3-1-4.500-4.500l1.500-2-2-4z" fill="#fff" /></template>
          <template v-else-if="a === 'utorrent'"><circle cx="15" cy="15" r="14.500" fill="#6fae3d" /><path d="M6 9l4-1 3 10q2 3 5 0L16 7l5-1 3 13 3 1-1 3q-5 1-6-2-4 4-8 1l2 6-4 1z" fill="#fff" /></template>
          <template v-else-if="a === 'telegram'"><circle cx="14" cy="15" r="13.500" fill="#27a0da" /><path d="M5 15l17-7-3 14-5-4-3 3-1-5z" fill="#fff" /><rect x="13" y="18" width="18" height="13" rx="3.500" fill="#f24840" /><text x="22" y="28.500" font-size="10" text-anchor="middle" fill="#fff">..42</text></template>
          <template v-else-if="a === 'discord'"><circle cx="15" cy="15" r="14.500" fill="#5865f2" /><path d="M8 9q7-3 14 0 4 6 3 12l-4 2-2-2h-8l-2 2-4-2q-1-6 3-12z" fill="#fff" /><circle cx="12" cy="16" r="2" fill="#5865f2" /><circle cx="21" cy="21" r="9" fill="#f15350" /><text x="21" y="25" font-size="11" font-weight="600" text-anchor="middle" fill="#fff">9+</text></template>
          <template v-else-if="a === 'teams'"><circle cx="16" cy="6" r="4.500" fill="#7b83eb" /><circle cx="25" cy="7" r="3" fill="#5059c9" /><path d="M11 11h18v9q0 8-9 8t-9-8z" fill="#6670cf" /><rect x="0" y="7" width="15" height="15" rx="1.500" fill="#4b53bc" /><text x="7.500" y="18.500" font-size="11" font-weight="700" text-anchor="middle" fill="#fff">T</text><circle cx="24" cy="24" r="6" fill="#7cb518" stroke="#fff" stroke-width="1.500" /><path d="M21 24l2.500 2.500 4-5" fill="none" stroke="#fff" stroke-width="1.500" /></template>
          <template v-else-if="a === 'xd'"><rect width="30" height="30" rx="5" fill="#470137" /><text x="15" y="21" font-size="16" font-weight="600" text-anchor="middle" fill="#f66df0" textLength="21" lengthAdjust="spacingAndGlyphs">Xd</text></template>
          <template v-else><rect width="30" height="30" rx="6" fill="#0b0e11" /><path d="M9 12l6-6 6 6M9 18l6 6 6-6" fill="none" stroke="#f0b90b" stroke-width="2.800" /><path d="M15 12l3 3-3 3-3-3zM6 12.500L8.500 15 6 17.500 3.500 15zM24 12.500l2.500 2.500-2.500 2.500-2.500-2.500z" fill="#f0b90b" /></template>
        </svg>
      </div>
      <div class="weather"><svg width="28" height="22" viewBox="0 0 28 22"><path d="M6 20.500a6 6 0 0 1 0-11.500 8.500 8.500 0 0 1 16-1 6.500 6.500 0 0 1 0 12.500z" fill="#acd8fb" /><path d="M8 10a7 7 0 0 1 13-2q-5 2-6 9-4-7-7-7z" fill="#e2f2ff" /></svg><span>12°C</span></div>
      <div class="tray">
        <svg viewBox="0 0 20 20"><circle cx="10" cy="10" r="8.500" fill="#15191d" /><path d="M10 10q-2.500-3.500-5-2.500a2.800 2.800 0 0 0 0 5.200Q7.500 13.700 10 10t5-2.500a2.800 2.800 0 0 1 0 5.200Q12.500 13.700 10 10M5 7.500Q9 2.500 14 5" fill="none" stroke="#ddd" stroke-width="1.800" /></svg>
        <svg viewBox="0 0 20 20"><path d="M0 0h20v20H0z" fill="#191c19" /><path d="M8 4h9v12H8z" fill="#76b900" /><path d="M3 10q6-7 12 0-6 6-12 0M6 10q3-4 6 0-3 3-6 0" fill="none" stroke="#456a19" stroke-width="1.400" /></svg>
        <svg viewBox="0 0 20 20"><path d="M2 19Q4 5 18 1q0 10-14 15z" fill="#aa64d4" /><path d="M1 20L17 2" stroke="#e8c6fa" /></svg>
        <svg viewBox="0 0 20 20"><circle cx="10" cy="10" r="8.500" fill="#43b581" /></svg>
        <svg viewBox="0 0 20 20"><rect x="6.500" y="0" width="7" height="13" rx="2.500" fill="#fff" /><path d="M3.500 9v4q0 3 3 3h7q3 0 3-3V9M10 16v3M6.500 19.200h7" stroke="#fff" stroke-width="1.300" fill="none" /></svg>
        <svg viewBox="0 0 20 20"><path d="M5 6.500h13v8H4v-4M18 9h1.500v3H18" stroke="#fff" fill="none" stroke-width="1.300" /><path d="M7 8.500h9.500v4.500H7zM0 4h5v3H0zM1 2h1v2H1zM3.500 2h1v2h-1zM2 7h1v4H2z" fill="#fff" /></svg>
        <svg viewBox="0 0 20 20"><circle cx="11" cy="3.500" r="3" fill="#7b83eb" /><path d="M7 7h12v7q0 5-6 5t-6-5z" fill="#5964c4" /><rect y="4" width="10" height="11" fill="#4b53bc" /><text x="5" y="13" font-size="9" font-weight="700" text-anchor="middle" fill="#fff">T</text><circle cx="16" cy="15" r="4.500" fill="#92c353" /><path d="M14 15l1.500 1.500L18 13.500" fill="none" stroke="#fff" /></svg>
        <svg viewBox="0 0 20 20"><g fill="none" stroke="#aeb3b7" stroke-width="1.200"><path d="M3 19Q3 5 17 3M6.500 19q0-10 10.500-12M10 19q0-6 7-8" /></g><path d="M13 19q0-3 4-4v4z" fill="#fff" /></svg>
        <svg viewBox="0 0 20 20"><path d="M1 7h3l4-4v14l-4-4H1z" fill="none" stroke="#fff" stroke-width="1.300" /><path d="M11 7.500q2 2.500 0 5M14 5q4 5 0 10M17 3q5 7 0 14" fill="none" stroke="#c9cdd0" stroke-width="1.200" /></svg>
        <svg viewBox="0 0 20 20"><circle cx="9.500" cy="10" r="9.500" fill="#27a0da" /><path d="M3 10l12-5-2 10-4-3-2 2-1-3z" fill="#fff" /><circle cx="14.500" cy="14.500" r="5.500" fill="#f24840" /><text x="14.500" y="17.300" font-size="7" text-anchor="middle" fill="#fff">..2</text></svg>
        <svg viewBox="0 0 20 20"><rect width="20" height="20" rx="4" fill="#1b72d4" /><path d="M5 4h10l2 5q1 0 1 2v5h-3v-2H5v2H2v-5q0-2 1-2z" fill="#fff" /><path d="M6 5.500h8l1 3H5z" fill="#1b72d4" /><circle cx="5" cy="11.500" r="1" fill="#1b72d4" /><circle cx="15" cy="11.500" r="1" fill="#1b72d4" /></svg>
      </div>
      <span class="lang">РУС</span>
      <div class="clock"><span>21:47</span><span>10.04.2022</span></div>
      <svg class="notes" width="34" height="34" viewBox="0 0 34 34"><path d="M1 2h20v17H10l-5 4v-4H1z" fill="#fff" /><path d="M5 6h12M5 10h12M5 14h7" stroke="#333" stroke-width="1.400" /><circle cx="20.500" cy="22" r="10.500" fill="#33373b" stroke="#8c9296" /><text x="20.500" y="27" font-size="14" font-weight="600" fill="#fff" text-anchor="middle" textLength="15">21</text></svg>
      <i class="peek"></i>
    </footer>
  </div>
</template>

<style>
body { margin: 0; overflow: hidden; }
</style>

<style scoped>
.app { width: 1919px; height: 1079px; display: flex; flex-direction: column; background: #e3e3e3; font-family: "Open Sans", "Noto Sans", sans-serif; color: #444; overflow: hidden; }
span, label, .select { white-space: nowrap; }
.titlebar { height: 40px; display: flex; align-items: center; background: #e3e3e3; }
.logo { margin-left: 20px; }
.menus { display: flex; margin-left: 33px; font-size: 14.500px; line-height: 20px; letter-spacing: -.25px; padding-top: 1px; }
.winbtns { margin-left: auto; display: flex; gap: 43px; padding-right: 21px; }
.winbtns path { fill: none; stroke: #222; stroke-width: 1.200; }
.toolbar { height: 50px; flex: none; display: flex; align-items: center; background: #f5f5f5; }
.home { margin-left: 20px; }
.tabs { display: flex; align-self: stretch; gap: 40px; margin-left: 43px; font-size: 15.500px; line-height: 53px; letter-spacing: -.05px; color: #8c8c8c; }
.tabs span { height: 50px; box-sizing: border-box; }
.tabs span:nth-child(1) { width: 98px; }
.tabs span:nth-child(2) { width: 72px; }
.tabs span:nth-child(3) { width: 150px; }
.tabs .on { color: #444; border-bottom: 3px solid #444; }
.doc { width: 339px; margin-left: 343px; display: flex; align-items: center; font-size: 14.500px; letter-spacing: -.13px; }
.doc span { width: 257px; }
.doc path { fill: none; stroke: #aaa; stroke-width: 1.500; }
.tools { display: flex; align-items: center; margin-left: 492px; width: 136px; justify-content: space-between; flex: none; }
.tools svg:nth-child(2) { margin-right: 3px; }
.zoom { margin-left: 24px; display: flex; align-items: center; justify-content: space-between; width: 88px; height: 29px; padding-bottom: 2px; border-bottom: 1px solid #dedede; font-size: 14.500px; letter-spacing: -.3px; flex: none; }
.zoom path { fill: none; stroke: #666; stroke-width: 1.700; }
.work { height: 937px; margin-top: 3px; display: flex; flex: none; }
.rail { width: 60px; height: 937px; flex: none; box-sizing: border-box; background: #f5f5f5; display: flex; flex-direction: column; align-items: center; padding: 19px 0 20px; gap: 31px; }
.pointer { margin-left: 2px; }
.mag { margin-top: -2px; }
.rail > svg:last-child { margin-top: -1px; }
.spring { flex: 1; }
.canvas { flex: none; display: block; background: #e3e3e3; }
.canvas text { font-family: "Open Sans", "Noto Sans", sans-serif; }
.canvas .tiny { font-size: 8.500px; }
.canvas .dim { fill: #5d7eaa; }
.canvas .small { font-size: 10.500px; }
.canvas .mid { font-size: 13px; }
.canvas .bold { font-weight: 700; }
.canvas .semi { font-weight: 600; }
.canvas .key { font-size: 17px; fill: #27466f; font-weight: 600; }
.canvas .ph { font-size: 21px; fill: #9dbce3; font-weight: 600; }
.canvas .mail { font-size: 17px; fill: #24466f; }
.canvas .dots { font-size: 12px; fill: #122c4d; }
.card rect, .tile { fill: #b8d7f9; stroke: #7795bd; stroke-width: 1.300; stroke-dasharray: 22 200 40 200; }
.panel { width: 359px; flex: none; box-sizing: border-box; background: #f5f5f5; padding-left: 20px; color: #858585; font-size: 14.500px; display: flex; flex-direction: column; }
.head { height: 20px; margin-top: 23px; display: flex; align-items: center; gap: 10px; font-size: 12px; letter-spacing: 1.250px; }
.head.first { margin-top: 18px; padding-left: 5px; }
.head svg { fill: none; stroke: #858585; stroke-width: 1.400; margin-top: 1px; }
.plus { width: 11px; height: 11px; margin: 0 24px 0 auto; background: linear-gradient(#aaa, #aaa) center / 11px 1px no-repeat, linear-gradient(#aaa, #aaa) center / 1px 11px no-repeat; }
.cap { font-size: 12.500px; letter-spacing: -.2px; height: 20px; line-height: 20px; margin-bottom: 4px; }
.trig { margin-top: 36px; }
.type { margin-top: 37px; margin-bottom: 5px; }
.anim { margin-top: 20px; }
.select { width: 320px; height: 39.500px; flex: none; box-sizing: border-box; border: 1px solid #dadada; border-radius: 5px; background: #fafafa; display: flex; align-items: center; justify-content: space-between; padding: 0 13px 0 19px; }
.select path, .field path { fill: none; stroke: #858585; stroke-width: 1.700; }
hr { margin: 0 0 0 -20px; border: 0; height: 2px; flex: none; background: #e1e1e1; width: 359px; }
.first-rule { margin-top: 41px; }
.check { display: flex; align-items: center; height: 20px; margin: 20px 0 13.500px 20px; gap: 13px; color: #a0a0a0; font-size: 14.900px; }
.check i { width: 16px; height: 16px; border: 2px solid #aaa; border-radius: 3px; }
.line { display: flex; padding-left: 20px; height: 38px; line-height: 38px; font-size: 14.500px; }
.line label { font-size: 12.500px; letter-spacing: -.2px; }
.ease { margin-top: 21.500px; }
.dur { margin-top: 22px; justify-content: space-between; padding-right: 34px; }
.field { display: flex; align-items: center; justify-content: space-between; border-bottom: 1px solid #dcdcdc; }
.ease label { width: 73px; }
.ease .field { width: 213px; letter-spacing: -.12px; }
.ease span { width: 188px; overflow: hidden; }
.short { width: 73px; }
.last-rule { margin-top: 40px; }
.taskbar { height: 49px; flex: none; display: flex; align-items: center; color: #f4f4f4; background: linear-gradient(90deg, #1e2126 0, #1e2228 30%, #202326 42%, #293744 49%, #2a3a49 63%, #293640 82%, #25292f 100%); }
.sys { width: 60px; display: flex; justify-content: center; }
.sys.view { width: 63px; }
.sys.view svg { margin-right: 4px; }
.app-slot { width: 51.800px; height: 49px; flex: none; box-sizing: border-box; display: flex; align-items: center; justify-content: center; }
.app-slot svg { margin-left: 1px; }
.run { background: linear-gradient(#ef6c70, #ef6c70) center bottom / 41px 2px no-repeat; }
.active { background: linear-gradient(#ef6c70, #ef6c70) center bottom / 50px 2px no-repeat, linear-gradient(#55616b, #55616b) center / 50px 49px no-repeat; }
.weather { display: flex; align-items: center; gap: 12px; margin-left: 31px; width: 95px; font-size: 18px; letter-spacing: -.6px; flex: none; }
.tray { display: flex; width: 320px; justify-content: space-between; flex: none; margin-left: 1px; }
.tray svg { width: 20px; height: 20px; }
.lang { margin-left: 14px; width: 31px; font-size: 14.500px; letter-spacing: -.4px; }
.clock { display: flex; flex-direction: column; align-items: center; width: 72px; margin-left: 12px; font-size: 14.300px; line-height: 22.500px; letter-spacing: -.3px; }
.notes { margin-left: 21px; }
.peek { width: 1px; height: 49px; margin-left: auto; margin-right: 3px; background: #70767b; }
</style>
